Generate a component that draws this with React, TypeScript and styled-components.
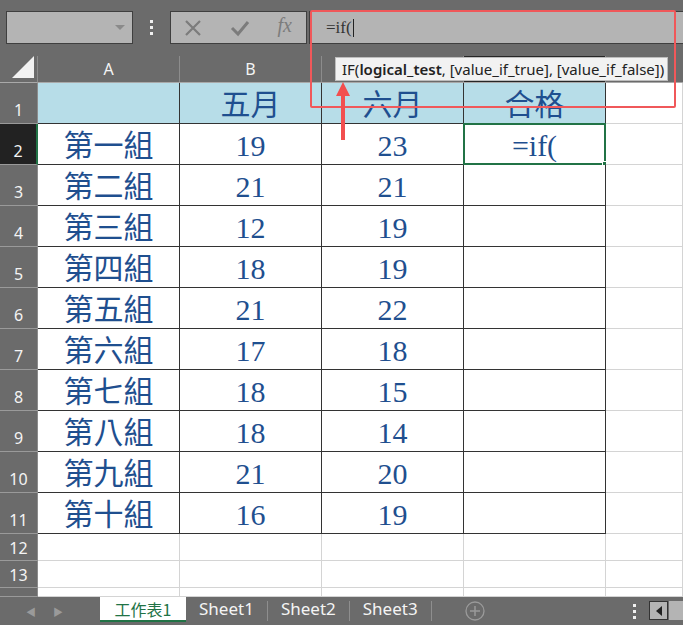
import React from "react";
import styled, { createGlobalStyle } from "styled-components";

const GlobalStyle = createGlobalStyle`
  html, body {
    margin: 0;
    padding: 0;
    background: #6b6b6b;
    overflow: hidden;
  }
  * {
    box-sizing: border-box;
  }
`;

const UI_FONT = `"Noto Sans", "Noto Sans CJK TC", sans-serif`;
const CELL_FONT = `"Liberation Serif", "Noto Sans CJK TC", serif`;

const rows = [
  ["第一組", "19", "23"],
  ["第二組", "21", "21"],
  ["第三組", "12", "19"],
  ["第四組", "18", "19"],
  ["第五組", "21", "22"],
  ["第六組", "17", "18"],
  ["第七組", "18", "15"],
  ["第八組", "18", "14"],
  ["第九組", "21", "20"],
  ["第十組", "16", "19"],
];

const App = () => {
  return (
    <Frame>
      <GlobalStyle />
      <FormulaBar>
        <NameBox>
          <DropArrow />
        </NameBox>
        <Dots>
          <i />
          <i />
          <i />
        </Dots>
        <FxGroup>
          <svg width="18" height="18" viewBox="0 0 18 18">
            <path d="M2 2 L16 16 M16 2 L2 16" stroke="#7c7c7c" strokeWidth="2.2" fill="none" />
          </svg>
          <svg width="20" height="18" viewBox="0 0 20 18">
            <path d="M2 9 L8 15 L18 3" stroke="#7c7c7c" strokeWidth="3" fill="none" />
          </svg>
          <FxLabel>fx</FxLabel>
        </FxGroup>
        <FormulaInput>
          <span>=if(</span>
          <Caret />
        </FormulaInput>
      </FormulaBar>

      <Sheet>
        <Corner>
          <svg width="22" height="22" viewBox="0 0 22 22">
            <polygon points="22,0 22,22 0,22" fill="#f2f2f2" />
          </svg>
        </Corner>
        <ColHead>A</ColHead>
        <ColHead>B</ColHead>
        {/* C and D letters sit under the function tooltip */}
        <ColHead />
        <ColHead $selected />
        <ColHead $last />

        <RowHead $h={41}>1</RowHead>
        <Cell $table $fill $h={41} />
        <Cell $table $fill $h={41}>五月</Cell>
        <Cell $table $fill $h={41}>六月</Cell>
        <Cell $table $fill $h={41}>合格</Cell>
        <Cell $h={41} />

        {rows.map((r, i) => (
          <React.Fragment key={i}>
            <RowHead $h={41} $selected={i === 0}>
              {i + 2}
            </RowHead>
            <Cell $table $h={41}>{r[0]}</Cell>
            <Cell $table $h={41}>{r[1]}</Cell>
            <Cell $table $h={41}>{r[2]}</Cell>
            <Cell $table $h={41}>
              {i === 0 && (
                <>
                  =if(
                  <ActiveBox>
                    <FillHandle />
                  </ActiveBox>
                </>
              )}
            </Cell>
            <Cell $h={41} />
          </React.Fragment>
        ))}

        {[12, 13, 14].map((n) => (
          <React.Fragment key={n}>
            <RowHead $h={n === 14 ? 9 : 27} $small>
              {n === 14 ? "" : n}
            </RowHead>
            <Cell $h={n === 14 ? 9 : 27} />
            <Cell $h={n === 14 ? 9 : 27} />
            <Cell $h={n === 14 ? 9 : 27} />
            <Cell $h={n === 14 ? 9 : 27} />
            <Cell $h={n === 14 ? 9 : 27} />
          </React.Fragment>
        ))}
      </Sheet>

      <TabBar>
        <TabNav>
          <span>◀</span>
          <span>▶</span>
        </TabNav>
        <ActiveTab>工作表1</ActiveTab>
        <Tab>Sheet1</Tab>
        <TabSep />
        <Tab>Sheet2</Tab>
        <TabSep />
        <Tab>Sheet3</Tab>
        <TabSep />
        <AddSheet>
          <svg width="20" height="20" viewBox="0 0 20 20">
            <circle cx="10" cy="10" r="9" stroke="#9a9a9a" strokeWidth="1.3" fill="none" />
            <path d="M10 5 V15 M5 10 H15" stroke="#9a9a9a" strokeWidth="1.5" />
          </svg>
        </AddSheet>
        <TabSpacer />
        <Dots $tabs>
          <i />
          <i />
          <i />
        </Dots>
        <ScrollButton>
          <svg width="8" height="10" viewBox="0 0 8 10">
            <polygon points="7,0 7,10 1,5" fill="#222" />
          </svg>
        </ScrollButton>
        <ScrollTrack />
      </TabBar>

      <Highlight />
      <Tooltip>
        IF(<b>logical_test</b>, [value_if_true], [value_if_false])
      </Tooltip>
      <Arrow width="16" height="60" viewBox="0 0 16 60">
        <polygon points="8,0 15,14 10,14 10,58 6,58 6,14 1,14" fill="#f24f4f" />
      </Arrow>
    </Frame>
  );
};

export default App;

const Frame = styled.div`
  position: relative;
  width: 683px;
  height: 625px;
  display: flex;
  flex-direction: column;
  background: #6b6b6b;
  overflow: hidden;
`;

const FormulaBar = styled.div`
  height: 56px;
  display: flex;
  align-items: flex-start;
  padding: 11px 0 0 6px;
`;

const Field = styled.div`
  height: 33px;
  background: #b4b4b4;
  border: 1px solid #3f3f3f;
`;

const NameBox = styled(Field)`
  width: 127px;
  position: relative;
`;

const DropArrow = styled.div`
  position: absolute;
  right: 7px;
  top: 13px;
  width: 0;
  height: 0;
  border-left: 5px solid transparent;
  border-right: 5px solid transparent;
  border-top: 5px solid #8a8a8a;
`;

const Dots = styled.div<{ $tabs?: boolean }>`
  width: ${({ $tabs }) => ($tabs ? "30px" : "37px")};
  height: ${({ $tabs }) => ($tabs ? "28px" : "33px")};
  display: flex;
  flex-direction: column;
  align-items: center;
  justify-content: center;
  gap: 3px;
  i {
    display: block;
    width: 3px;
    height: 3px;
    background: #f0f0f0;
  }
`;

const FxGroup = styled(Field)`
  width: 137px;
  display: flex;
  align-items: center;
  justify-content: space-between;
  padding: 0 14px 0 13px;
`;

const FxLabel = styled.span`
  font-family: "Liberation Serif", serif;
  font-style: italic;
  font-size: 20px;
  color: #7c7c7c;
  margin-top: -4px;
`;

const FormulaInput = styled(Field)`
  flex: 1;
  margin-left: 2px;
  border-right: none;
  display: flex;
  align-items: center;
  padding-left: 16px;
  font-family: "Liberation Serif", serif;
  font-size: 17px;
  color: #333;
`;

const Caret = styled.div`
  width: 1px;
  height: 18px;
  background: #222;
  margin-left: 1px;
`;

const Sheet = styled.div`
  display: grid;
  grid-template-columns: 38px 142px 142px 142px 142px 77px;
  align-content: start;
  flex: 1;
  background: #fff;
  overflow: hidden;
`;

const Corner = styled.div`
  height: 27px;
  background: #6b6b6b;
  border-right: 1px solid #8c8c8c;
  border-bottom: 1px solid #a9a9a9;
  display: flex;
  align-items: flex-end;
  justify-content: flex-end;
  padding: 0 3px 4px 0;
`;

const ColHead = styled.div<{ $selected?: boolean; $last?: boolean }>`
  height: 27px;
  background: ${({ $selected }) => ($selected ? "#262626" : "#6b6b6b")};
  border-right: ${({ $last }) => ($last ? "none" : "1px solid #8c8c8c")};
  border-bottom: 1px solid #a9a9a9;
  color: #f4f4f4;
  font-family: ${UI_FONT};
  font-size: 16px;
  display: flex;
  align-items: center;
  justify-content: center;
`;

const RowHead = styled.div<{ $h: number; $selected?: boolean; $small?: boolean }>`
  height: ${({ $h }) => $h}px;
  background: ${({ $selected }) => ($selected ? "#222" : "#6b6b6b")};
  border-bottom: 1px solid #9a9a9a;
  border-right: ${({ $selected }) => ($selected ? "2px solid #217346" : "1px solid #8c8c8c")};
  color: #f4f4f4;
  font-family: ${UI_FONT};
  font-size: 16px;
  line-height: 1;
  display: flex;
  align-items: flex-end;
  justify-content: center;
  padding-bottom: ${({ $small }) => ($small ? "4px" : "5px")};
  overflow: hidden;
`;

const Cell = styled.div<{ $h: number; $table?: boolean; $fill?: boolean }>`
  position: relative;
  height: ${({ $h }) => $h}px;
  background: ${({ $fill }) => ($fill ? "#b7dde8" : "#fff")};
  border-right: 1px solid ${({ $table }) => ($table ? "#333" : "#d4d4d4")};
  border-bottom: 1px solid ${({ $table }) => ($table ? "#333" : "#d4d4d4")};
  color: #1f4f8f;
  font-family: ${CELL_FONT};
  font-size: 30px;
  line-height: 1;
  display: flex;
  align-items: flex-end;
  justify-content: center;
  padding-bottom: 3px;
`;

const ActiveBox = styled.div`
  position: absolute;
  left: -1px;
  top: -1px;
  right: -1px;
  bottom: -1px;
  border: 2px solid #217346;
  pointer-events: none;
`;

const FillHandle = styled.div`
  position: absolute;
  right: -4px;
  bottom: -4px;
  width: 6px;
  height: 6px;
  background: #217346;
  border: 1px solid #fff;
`;

const TabBar = styled.div`
  height: 28px;
  display: flex;
  align-items: flex-start;
  background: #6b6b6b;
  font-family: ${UI_FONT};
  font-size: 17px;
`;

const TabNav = styled.div`
  width: 100px;
  height: 28px;
  display: flex;
  align-items: center;
  gap: 17px;
  padding-left: 26px;
  color: #9a9a9a;
  font-size: 10px;
`;

const ActiveTab = styled.div`
  width: 86px;
  height: 25px;
  background: #fff;
  color: #217346;
  border-bottom: 2px solid #217346;
  display: flex;
  align-items: center;
  justify-content: center;
  font-family: "Noto Sans CJK TC", sans-serif;
  font-size: 16px;
`;

const Tab = styled.div`
  height: 22px;
  display: flex;
  align-items: center;
  padding: 0 13px;
  color: #f4f4f4;
`;

const TabSep = styled.div`
  width: 1px;
  height: 20px;
  margin-top: 4px;
  background: #8e8e8e;
`;

const AddSheet = styled.div`
  height: 28px;
  display: flex;
  align-items: center;
  margin-left: 33px;
`;

const TabSpacer = styled.div`
  flex: 1;
`;

const ScrollButton = styled.div`
  width: 19px;
  height: 19px;
  margin-top: 4px;
  background: #b4b4b4;
  border: 1px solid #333;
  display: flex;
  align-items: center;
  justify-content: center;
`;

const ScrollTrack = styled.div`
  width: 14px;
  height: 19px;
  margin-top: 4px;
  margin-left: 1px;
  background: #b4b4b4;
`;

const Highlight = styled.div`
  position: absolute;
  left: 310px;
  top: 10px;
  width: 366px;
  height: 98px;
  border: 2px solid #f0585a;
  border-radius: 2px;
  pointer-events: none;
`;

const Tooltip = styled.div`
  position: absolute;
  left: 335px;
  top: 57px;
  width: 333px;
  height: 24px;
  background: #f2f2f2;
  border: 1px solid #bdbdbd;
  font-family: ${UI_FONT};
  font-size: 15px;
  color: #222;
  display: flex;
  align-items: center;
  padding-left: 6px;
  white-space: nowrap;
  overflow: hidden;
  b {
    font-weight: 600;
  }
`;

const Arrow = styled.svg`
  position: absolute;
  left: 335px;
  top: 82px;
`;
